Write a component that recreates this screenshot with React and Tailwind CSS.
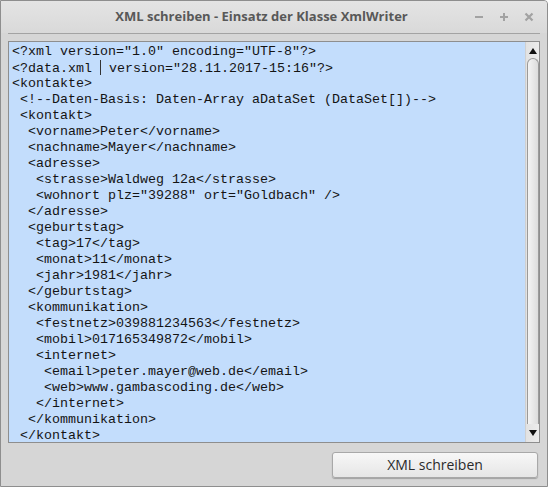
import React from 'react';

const lines = [
    '<?xml version="1.0" encoding="UTF-8"?>',
    null,
    '<kontakte>',
    ' <!--Daten-Basis: Daten-Array aDataSet (DataSet[])-->',
    ' <kontakt>',
    '  <vorname>Peter</vorname>',
    '  <nachname>Mayer</nachname>',
    '  <adresse>',
    '   <strasse>Waldweg 12a</strasse>',
    '   <wohnort plz="39288" ort="Goldbach" />',
    '  </adresse>',
    '  <geburtstag>',
    '   <tag>17</tag>',
    '   <monat>11</monat>',
    '   <jahr>1981</jahr>',
    '  </geburtstag>',
    '  <kommunikation>',
    '   <festnetz>039881234563</festnetz>',
    '   <mobil>017165349872</mobil>',
    '   <internet>',
    '    <email>peter.mayer@web.de</email>',
    '    <web>www.gambascoding.de</web>',
    '   </internet>',
    '  </kommunikation>',
    ' </kontakt>',
];

const App = () => {
    return (
        <div className="w-[548px] h-[487px] bg-[#d6d6d6] border border-[#8e8e8e] rounded-tr-[4px] flex flex-col overflow-hidden" style={{ fontFamily: '"Open Sans", "Noto Sans", sans-serif' }}>
            <div className="h-[32px] shrink-0 bg-gradient-to-b from-[#e4e4e4] to-[#d9d9d9] flex items-center">
                <div className="flex-1 text-center pl-[68px] text-[13px] font-bold text-[#585858]">XML schreiben - Einsatz der Klasse XmlWriter</div>
                <div className="flex items-center gap-[15px] pr-[13px] pl-[20px] text-[#a2a2a2]">
                    <svg width="10" height="10" viewBox="0 0 10 10"><rect x="1" y="4" width="8" height="2" fill="currentColor" /></svg>
                    <svg width="10" height="10" viewBox="0 0 10 10"><rect x="1" y="4" width="8" height="2" fill="currentColor" /><rect x="4" y="1" width="2" height="8" fill="currentColor" /></svg>
                    <svg width="10" height="10" viewBox="0 0 10 10"><path d="M1.5 1.5 L8.5 8.5 M8.5 1.5 L1.5 8.5" stroke="currentColor" strokeWidth="2.2" /></svg>
                </div>
            </div>
            <div className="mx-[7px] h-px bg-[#a3a3a3] shrink-0" />
            <div className="px-[7px] pt-[7px] flex flex-col">
                <div className="h-[402px] border border-[#8e8e8e] bg-[#c3ddfc] flex">
                    <div className="flex-1 pl-[3px] pt-[2px] overflow-hidden text-[13.33px] leading-[16px] text-[#141414] whitespace-pre" style={{ fontFamily: '"Liberation Mono", "Courier New", monospace' }}>
                        {lines.map((l, i) => (
                            <div key={i} className="h-[16px]">
                                {l === null ? (
                                    <>{'<?data.xml '}<span className="inline-block w-px h-[15px] bg-[#333] align-[-3px]" />{' version="28.11.2017-15:16"?>'}</>
                                ) : l}
                            </div>
                        ))}
                    </div>
                    <div className="w-[14px] bg-gradient-to-r from-[#e2e2e2] to-[#ececec] border-l border-[#d0d0d0] flex flex-col items-center">
                        <svg className="mt-[6px]" width="8" height="6" viewBox="0 0 8 6"><path d="M4 0 L8 6 L0 6 Z" fill="#111" /></svg>
                        <div className="mt-[4px] w-[12px] flex-1 rounded-t-[6px] border border-b-0 border-[#9a9a9a] bg-gradient-to-r from-[#f4f4f4] to-[#dcdcdc]" />
                        <svg className="my-[6px]" width="8" height="6" viewBox="0 0 8 6"><path d="M0 0 L8 0 L4 6 Z" fill="#111" /></svg>
                    </div>
                </div>
                <div className="flex justify-end mt-[9px] pr-[2px]">
                    <button className="w-[206px] h-[26px] rounded-[3px] border border-[#a8a8a8] bg-gradient-to-b from-[#f7f7f7] to-[#e6e6e6] shadow-[0_1px_1px_rgba(0,0,0,0.25)] text-[14px] text-[#2a2a2a] leading-none">XML schreiben</button>
                </div>
            </div>
        </div>
    );
};

export default App;
